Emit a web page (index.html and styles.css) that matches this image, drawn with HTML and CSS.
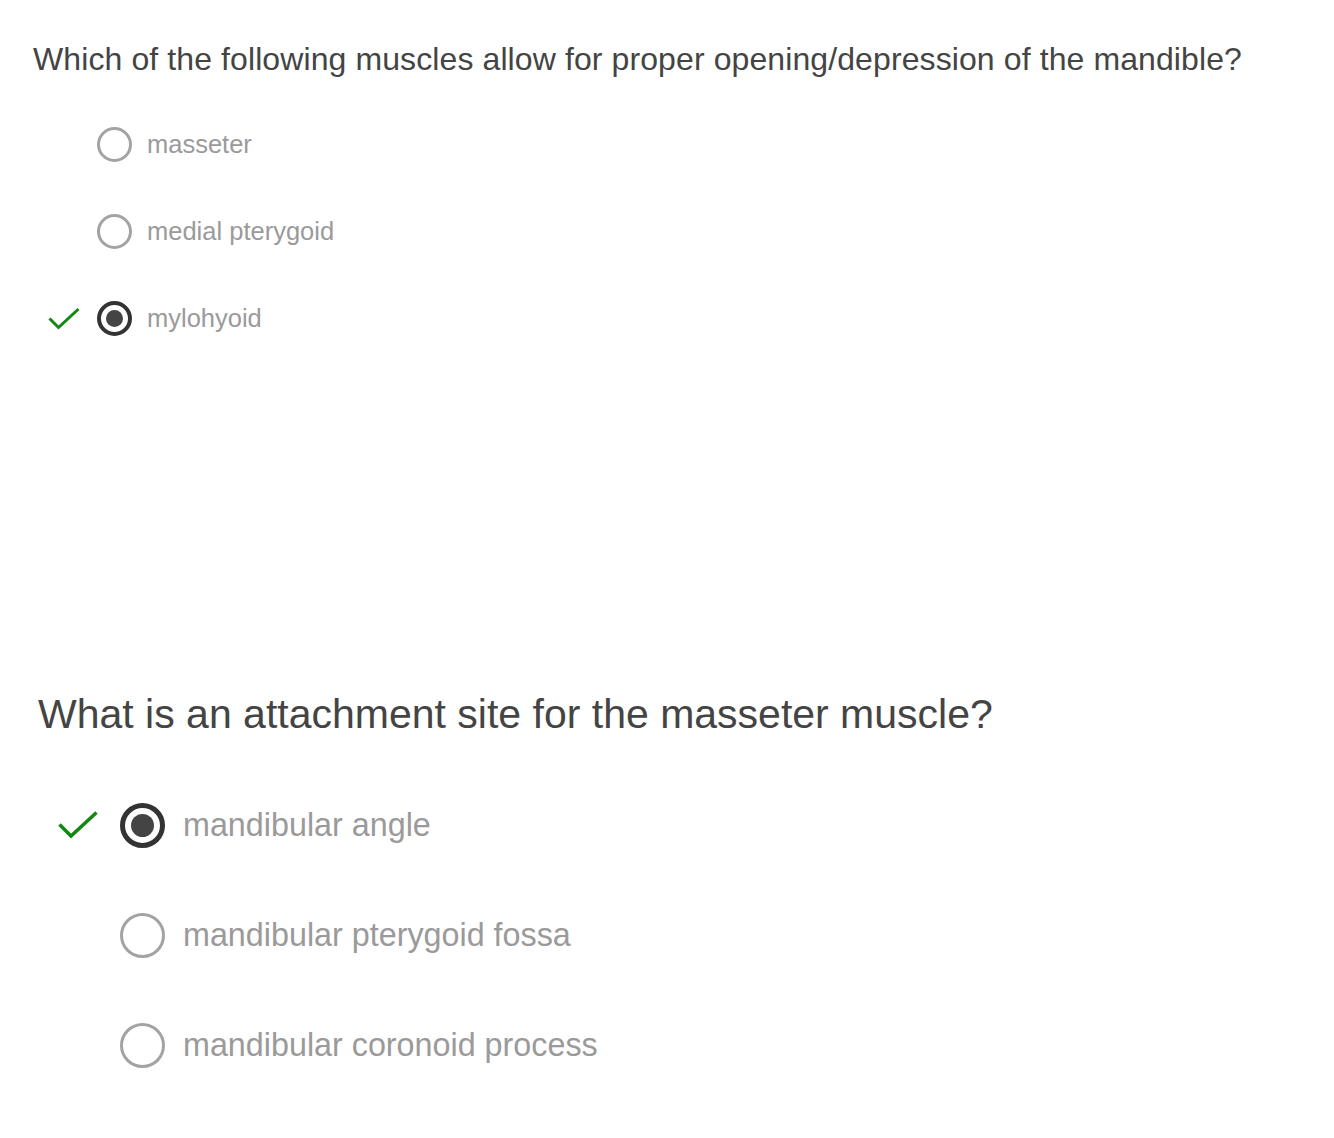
FILE: index.html
```html
<!DOCTYPE html>
<html>
<head>
<meta charset="utf-8">
<link rel="stylesheet" href="styles.css">
</head>
<body>
<section class="q q1">
  <h2 class="title">Which of the following muscles allow for proper opening/depression of the mandible?</h2>
  <ul class="opts">
    <li class="opt"><span class="check"></span><span class="radio"></span><span class="label">masseter</span></li>
    <li class="opt"><span class="check"></span><span class="radio"></span><span class="label">medial pterygoid</span></li>
    <li class="opt"><span class="check"><svg viewBox="0 0 32 24" width="32" height="24"><polyline points="1.5,11.5 10.5,20.5 30.5,2" fill="none" stroke="#118811" stroke-width="3"/></svg></span><span class="radio on"></span><span class="label">mylohyoid</span></li>
  </ul>
</section>
<section class="q q2">
  <h2 class="title">What is an attachment site for the masseter muscle?</h2>
  <ul class="opts">
    <li class="opt"><span class="check"><svg viewBox="0 0 40 30" width="40" height="30"><polyline points="1.5,14.5 13,26 38.5,2.5" fill="none" stroke="#118811" stroke-width="3.5"/></svg></span><span class="radio on"></span><span class="label">mandibular angle</span></li>
    <li class="opt"><span class="check"></span><span class="radio"></span><span class="label">mandibular pterygoid fossa</span></li>
    <li class="opt"><span class="check"></span><span class="radio"></span><span class="label">mandibular coronoid process</span></li>
  </ul>
</section>
</body>
</html>
```
FILE: styles.css
```css
html, body {
  margin: 0;
  padding: 0;
  background: #fff;
  font-family: "Liberation Sans", Arial, Helvetica, sans-serif;
}
.title {
  margin: 0;
  font-weight: normal;
  color: #444;
}
.opts {
  list-style: none;
  margin: 0;
  padding: 0;
}
.opt {
  display: flex;
  align-items: center;
}
.check {
  display: flex;
  align-items: center;
  flex: none;
}
.radio {
  flex: none;
  box-sizing: border-box;
  border-radius: 50%;
  border: 3px solid #a3a3a3;
  display: flex;
  align-items: center;
  justify-content: center;
}
.radio.on {
  border-color: #333;
}
.radio.on::after {
  content: "";
  border-radius: 50%;
  background: #444;
}
.label {
  color: #9a9a9a;
}

/* question 1 */
.q1 {
  padding: 40px 0 0 33px;
}
.q1 .title {
  font-size: 32px;
  line-height: 38px;
  letter-spacing: 0.1px;
}
.q1 .opts {
  margin-top: 23px;
  padding-left: 15px;
}
.q1 .opt {
  height: 87px;
}
.q1 .check {
  width: 49px;
}
.q1 .radio {
  width: 35px;
  height: 35px;
}
.q1 .radio.on {
  border-width: 4px;
}
.q1 .radio.on::after {
  width: 17px;
  height: 17px;
}
.q1 .label {
  margin-left: 15px;
  font-size: 25.5px;
}

/* question 2 */
.q2 {
  padding: 328px 0 0 38px;
}
.q2 .title {
  font-size: 41px;
  line-height: 48px;
}
.q2 .opts {
  margin-top: 32px;
  padding-left: 20px;
}
.q2 .opt {
  height: 110px;
}
.q2 .check {
  width: 62px;
}
.q2 .radio {
  width: 45px;
  height: 45px;
  border-width: 3.5px;
}
.q2 .radio.on {
  border-width: 5px;
}
.q2 .radio.on::after {
  width: 23px;
  height: 23px;
}
.q2 .label {
  margin-left: 18px;
  font-size: 32.3px;
}
```
